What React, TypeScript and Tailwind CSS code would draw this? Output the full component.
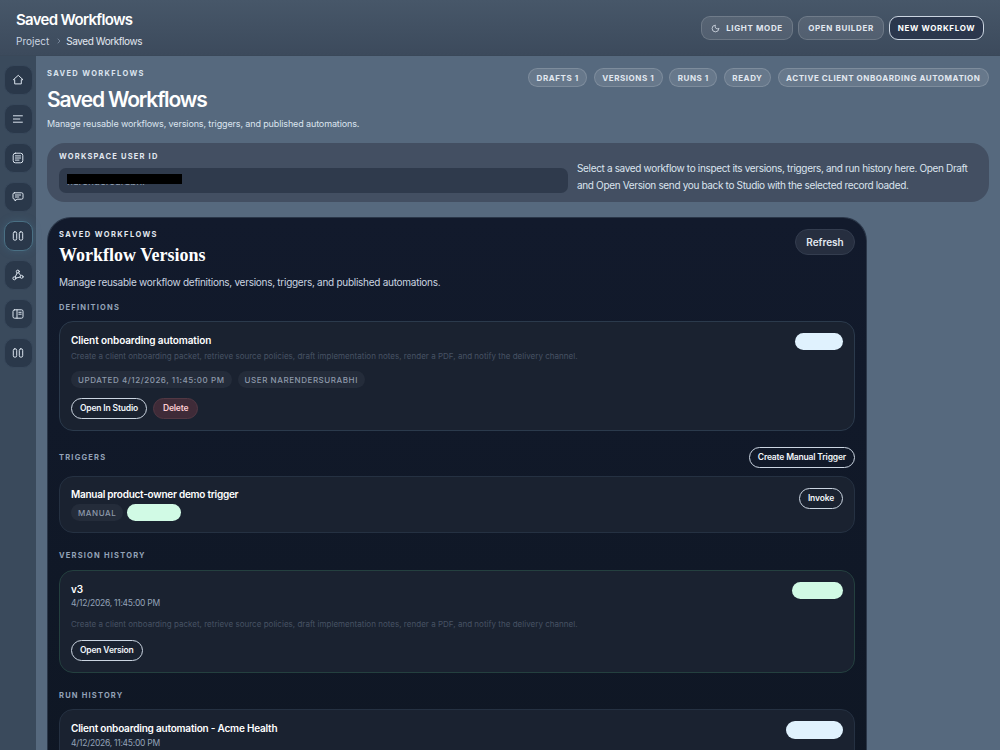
import React from 'react';
import { ChevronRight, Moon } from 'lucide-react';

const Icon = ({ children, size = 12 }: { children: React.ReactNode; size?: number }) => (
  <svg width={size} height={size} viewBox="0 0 12 12" fill="none" stroke="currentColor" strokeWidth="1" strokeLinecap="round" strokeLinejoin="round">
    {children}
  </svg>
);

const HomeIcon = () => <Icon><path d="M6 1.600 1.400 5.700h1.300v4.200h6.600V5.700h1.300z" /></Icon>;
const LinesIcon = () => <Icon><path d="M1.400 2.800h9M1.400 6h6.400M1.400 9.200h9" /></Icon>;
const NoteIcon = () => (
  <Icon>
    <rect x="1.200" y="1.200" width="9.600" height="9.600" rx="2.200" />
    <path d="M3.400 3.900h5.200M3.400 6h5.200M3.400 8.100h3.600" />
  </Icon>
);
const ChatIcon = () => (
  <Icon>
    <path d="M2.400 1.800h7.200a1.400 1.400 0 0 1 1.400 1.400v3.600a1.400 1.400 0 0 1-1.400 1.400H5L3 10V8.200H2.400A1.400 1.400 0 0 1 1 6.800V3.200a1.400 1.400 0 0 1 1.400-1.400z" />
    <path d="M3.400 4h5.200M3.400 6h3.400" />
  </Icon>
);
const ColumnsIcon = () => (
  <Icon>
    <rect x="1.300" y="1.800" width="3.400" height="8.400" rx="1.500" />
    <rect x="7.300" y="1.800" width="3.400" height="8.400" rx="1.500" />
  </Icon>
);
const NodesIcon = () => (
  <Icon>
    <circle cx="5.800" cy="2.600" r="1.500" />
    <circle cx="2.400" cy="9.300" r="1.500" />
    <circle cx="9.600" cy="7.800" r="1.500" />
    <path d="M5.100 4 3.200 8M3.900 9 8.100 8.100M6.700 3.800 8.700 6.500" />
  </Icon>
);
const BookIcon = () => (
  <Icon>
    <rect x="1" y="1.800" width="10" height="8.400" rx="1.500" />
    <path d="M5 1.800v8.400M6.800 4.300h2.400M6.800 6.200h2.400" />
  </Icon>
);

const RailButton = ({ children, active }: { children: React.ReactNode; active?: boolean }) => (
  <div className={`w-[29px] h-[30px] rounded-[10px] border flex items-center justify-center text-[#dbe4ee] bg-[#2a384a] ${active ? 'border-[#4a7084] shadow-[0_0_8px_rgba(80,140,170,0.25)]' : 'border-[#38485b]'}`}>
    {children}
  </div>
);

const Chip = ({ children }: { children: React.ReactNode }) => (
  <span className="h-[19px] px-[7.5px] rounded-full border border-white/15 bg-white/10 text-[8px] font-bold tracking-[0.07em] text-[#e2e8f0] flex items-center whitespace-nowrap">
    {children}
  </span>
);

const Tag = ({ children }: { children: React.ReactNode }) => (
  <span className="h-[17px] px-[7px] rounded-full bg-[#242c3a] text-[8px] font-medium tracking-[0.07em] text-[#8d99aa] flex items-center whitespace-nowrap">
    {children}
  </span>
);

const Outline = ({ children }: { children: React.ReactNode }) => (
  <button className="h-[21px] px-2 rounded-full border border-[#cbd5e1] text-[8.5px] font-semibold tracking-[-0.02em] text-[#f1f5f9] whitespace-nowrap">
    {children}
  </button>
);

const SectionLabel = ({ children }: { children: React.ReactNode }) => (
  <div className="text-[7.5px] font-bold leading-[12px] tracking-[0.16em] text-[#94a3b8]">{children}</div>
);

const Card = ({ className, children }: { className: string; children: React.ReactNode }) => (
  <div className={`rounded-[14px] border bg-[#1a2230] px-[11px] ${className}`}>{children}</div>
);

const muted = 'Create a client onboarding packet, retrieve source policies, draft implementation notes, render a PDF, and notify the delivery channel.';
const headerBtn = 'h-6 rounded-[9px] border text-[8px] font-bold tracking-[0.08em]';

export default function App() {
  return (
    <div className="h-[750px] overflow-hidden bg-[#56697e] font-['Inter',sans-serif] text-white">
      <header className="h-[56px] px-4 flex items-center justify-between bg-gradient-to-b from-[#475769] to-[#3c4a5c] border-b border-[#3a4859]">
        <div className="mt-[3px]">
          <div className="text-[15px] font-semibold leading-[20px] tracking-[-0.045em]">Saved Workflows</div>
          <div className="mt-[4px] flex items-center gap-[6px] text-[10px] text-[#e2e8f0]">
            <span className="text-[#cbd5e1]">Project</span>
            <ChevronRight size={8} className="text-[#94a3b8]" />
            <span className="-ml-[3px] tracking-[-0.043em]">Saved Workflows</span>
          </div>
        </div>
        <div className="flex gap-[5px] mt-[1px]">
          <button className={`${headerBtn} w-[92px] border-white/15 bg-white/10 flex items-center justify-center gap-[6px] text-[#e2e8f0]`}>
            <Moon size={9} />
            LIGHT MODE
          </button>
          <button className={`${headerBtn} w-[86px] border-white/15 bg-white/10 text-[#e2e8f0]`}>
            OPEN BUILDER
          </button>
          <button className={`${headerBtn} w-[95px] border-[#cbd5e1] bg-[#2b374d] text-white`}>
            NEW WORKFLOW
          </button>
        </div>
      </header>

      <div className="flex h-[694px]">
        <aside className="w-[36px] shrink-0 bg-[#3a4a5c] pt-[9px] pl-[3.5px] flex flex-col gap-[9px]">
          <RailButton><HomeIcon /></RailButton>
          <RailButton><LinesIcon /></RailButton>
          <RailButton><NoteIcon /></RailButton>
          <RailButton><ChatIcon /></RailButton>
          <RailButton active><ColumnsIcon /></RailButton>
          <RailButton><NodesIcon /></RailButton>
          <RailButton><BookIcon /></RailButton>
          <RailButton><ColumnsIcon /></RailButton>
        </aside>

        <main className="flex-1 min-w-0 pl-[11px] pr-[11px] pt-[12px]">
          <div className="flex justify-between">
            <div>
              <div className="text-[7.5px] font-bold tracking-[0.18em] text-[#dbe4ee] leading-[12px]">SAVED WORKFLOWS</div>
              <h1 className="mt-[5px] text-[21px] font-semibold leading-[30px] tracking-[-0.056em]">Saved Workflows</h1>
              <p className="mt-[2px] text-[9px] leading-[14px] tracking-[-0.014em] text-[#dbe4ee]">Manage reusable workflows, versions, triggers, and published automations.</p>
            </div>
            <div className="flex gap-[6.5px] items-start">
              <Chip>DRAFTS 1</Chip>
              <Chip>VERSIONS 1</Chip>
              <Chip>RUNS 1</Chip>
              <Chip>READY</Chip>
              <Chip>ACTIVE CLIENT ONBOARDING AUTOMATION</Chip>
            </div>
          </div>

          <section className="mt-[12px] h-[59px] rounded-[18px] bg-[#434f62] px-3 flex gap-[9px] items-center">
            <div className="w-[509px] shrink-0 -mt-[2px]">
              <div className="text-[7.5px] font-bold tracking-[0.16em] text-[#e2e8f0] leading-[14px]">WORKSPACE USER ID</div>
              <div className="relative mt-[4px] h-[25px] rounded-[7px] bg-[#2f3a4c] pl-2 text-[10px] leading-[27px] text-[#94a3b8]">
                narendersurabhi
                <div className="absolute left-2 top-[6px] w-[115px] h-[10px] bg-black" />
              </div>
            </div>
            <p className="mt-[9px] text-[10px] leading-[17px] tracking-[-0.034em] text-[#dbe4ee]">
              Select a saved workflow to inspect its versions, triggers, and run history here. Open Draft and Open Version send you back to Studio with the selected record loaded.
            </p>
          </section>

          <section className="mt-[15px] w-[820px] rounded-t-[24px] border-x border-t border-[#2a3648] bg-gradient-to-b from-[#121a2c] to-[#0f1724] px-[11px] pt-[11px] h-[560px] overflow-hidden">
            <div className="flex justify-between">
              <div>
                <div className="text-[7.5px] font-bold tracking-[0.19em] text-[#e2e8f0] leading-[12px]">SAVED WORKFLOWS</div>
                <h2 className="mt-[2px] font-['Liberation_Serif',serif] text-[18px] font-bold leading-[24px]">Workflow Versions</h2>
              </div>
              <button className="h-[26px] w-[60px] rounded-full bg-[#262e3f] border border-[#343d4f] text-[10px] font-semibold text-[#e2e8f0]">Refresh</button>
            </div>
            <p className="mt-[8px] text-[10px] leading-[14px] tracking-[-0.027em] text-[#cbd5e1]">Manage reusable workflow definitions, versions, triggers, and published automations.</p>

            <div className="mt-[13px]"><SectionLabel>DEFINITIONS</SectionLabel></div>
            <Card className="mt-[7px] h-[110px] pt-[10px] border-[#2b3a4c]">
              <div className="flex justify-between">
                <div className="text-[10px] font-semibold leading-[16px] tracking-[-0.01em]">Client onboarding automation</div>
                <div className="mt-[1px] w-[48px] h-[17px] rounded-full bg-[#e0f2fe]" />
              </div>
              <p className="text-[8px] leading-[12px] tracking-[0.003em] text-[#475264]">{muted}</p>
              <div className="mt-[9px] flex gap-[6px]">
                <Tag>UPDATED 4/12/2026, 11:45:00 PM</Tag>
                <Tag>USER NARENDERSURABHI</Tag>
              </div>
              <div className="mt-[10px] flex gap-[6px]">
                <Outline>Open In Studio</Outline>
                <button className="h-[21px] px-[9px] rounded-full bg-[#3f2b38] border border-[#523843] text-[8.5px] font-semibold tracking-[-0.02em] text-[#fecdd3]">Delete</button>
              </div>
            </Card>

            <div className="mt-[16px] flex items-center justify-between"><SectionLabel>TRIGGERS</SectionLabel><Outline>Create Manual Trigger</Outline></div>
            <Card className="mt-[8px] h-[57px] pt-[10px] border-[#253142]">
              <div className="flex justify-between">
                <div>
                  <div className="text-[10px] font-semibold leading-[14px] tracking-[-0.025em]">Manual product-owner demo trigger</div>
                  <div className="mt-[3px] flex gap-[4px]">
                    <Tag>MANUAL</Tag>
                    <div className="w-[54px] h-[17px] rounded-full bg-[#d1fae5]" />
                  </div>
                </div>
                <div className="mt-[1px] flex items-start"><Outline>Invoke</Outline></div>
              </div>
            </Card>

            <div className="mt-[17px]"><SectionLabel>VERSION HISTORY</SectionLabel></div>
            <Card className="mt-[8px] h-[103px] pt-[11px] border-[#24403f]">
              <div className="flex justify-between">
                <div>
                  <div className="text-[10px] font-semibold leading-[14px]">v3</div>
                  <div className="text-[8.5px] leading-[14px] tracking-[-0.03em] text-[#94a3b8]">4/12/2026, 11:45:00 PM</div>
                </div>
                <div className="w-[51px] h-[17px] rounded-full bg-[#d1fae5]" />
              </div>
              <p className="mt-[7px] text-[8px] leading-[14px] tracking-[0.003em] text-[#475264]">{muted}</p>
              <div className="mt-[4px]"><Outline>Open Version</Outline></div>
            </Card>

            <div className="mt-[17px]"><SectionLabel>RUN HISTORY</SectionLabel></div>
            <Card className="mt-[7px] h-[100px] pt-[11px] border-[#253142]">
              <div className="flex justify-between">
                <div>
                  <div className="text-[10px] font-semibold leading-[14px] tracking-[-0.02em]">Client onboarding automation - Acme Health</div>
                  <div className="mt-[1px] text-[8.5px] leading-[14px] tracking-[-0.03em] text-[#94a3b8]">4/12/2026, 11:45:00 PM</div>
                </div>
                <div className="w-[57px] h-[18px] rounded-full bg-[#e0f2fe]" />
              </div>
            </Card>
          </section>
        </main>
      </div>
    </div>
  );
}
